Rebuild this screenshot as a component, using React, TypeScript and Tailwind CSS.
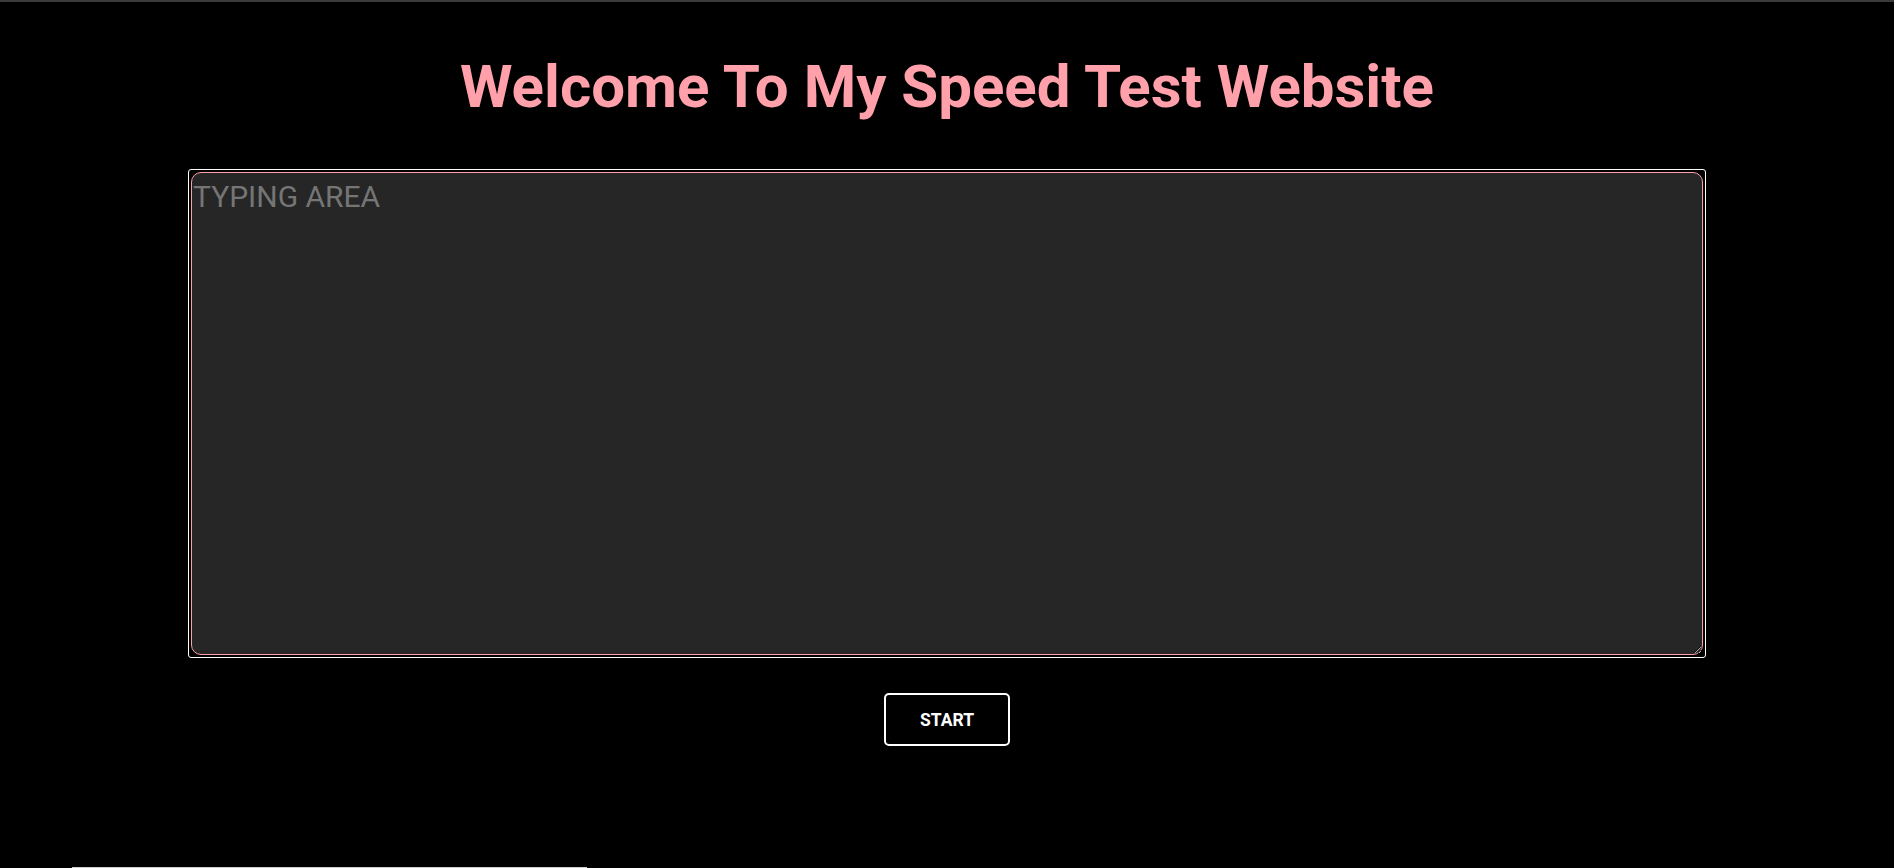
export default function App() {
  return (
    <div className="flex h-[868px] flex-col overflow-hidden bg-black font-['Roboto',sans-serif]">
      <div className="h-[2px] w-full bg-[#3a3a3a]" />
      <h1 className="mt-[50px] text-center text-[60px] font-bold leading-[70px] text-[#ffa0aa]">
        Welcome To My Speed Test Website
      </h1>
      <div className="mx-auto mt-[47px] w-[1518px] rounded-[3px] border border-white p-[2px]">
        <textarea
          placeholder="TYPING AREA"
          className="block h-[483px] w-full resize rounded-[10px] border border-[#ff9fa8] bg-[#262626] px-px pt-[6px] text-[30px] leading-[35px] text-white outline-none placeholder:text-[#757575]"
        />
      </div>
      <div className="mt-[35px] flex justify-center">
        <button className="h-[53px] w-[126px] rounded-[5px] border-2 border-white bg-black pt-[2px] text-[17.5px] font-bold text-white">
          START
        </button>
      </div>
      <div className="mt-auto flex">
        <div className="ml-[72px] h-px w-[515px] bg-[#d0d0d0]" />
      </div>
    </div>
  )
}
